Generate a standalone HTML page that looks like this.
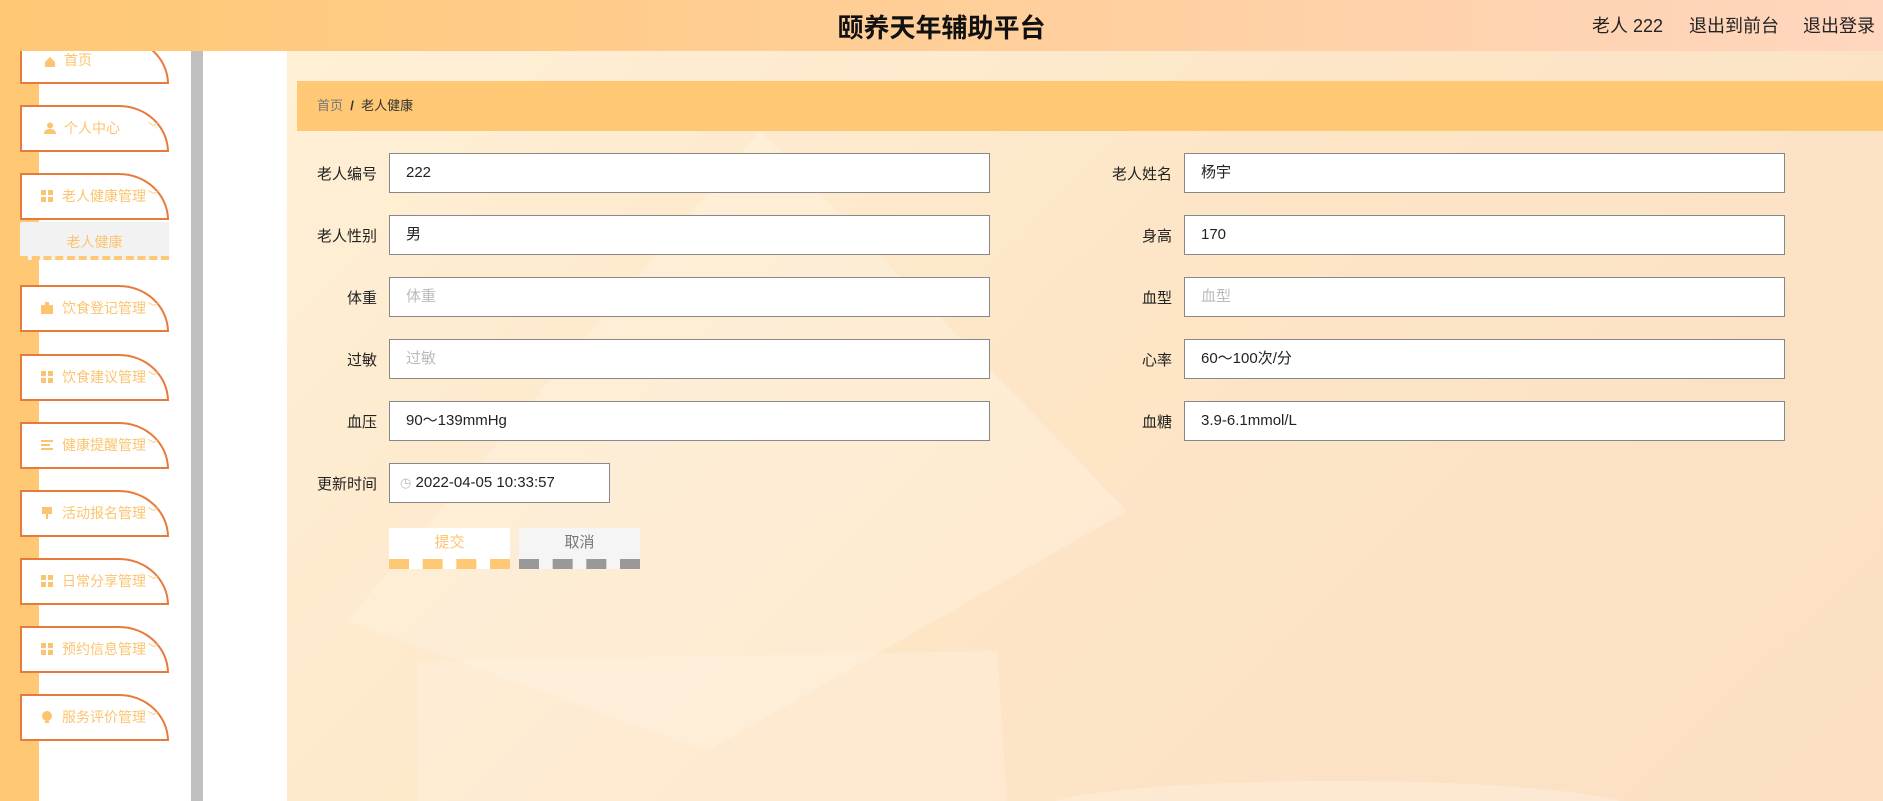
<!DOCTYPE html>
<html><head><meta charset="utf-8"><style>
*{margin:0;padding:0;box-sizing:border-box}
body{width:1883px;height:801px;overflow:hidden;font-family:"Liberation Sans","Noto Sans CJK SC",sans-serif;background:#fff;position:relative}
.hdr{position:absolute;left:0;top:0;width:1883px;height:51px;background:linear-gradient(90deg,#ffc874,#ffd0a0 60%,#ffd6bf);z-index:5}
.hdr .t{position:absolute;left:0;width:1883px;text-align:center;top:8px;font-size:26px;font-weight:bold;color:#111}
.hdr .r{position:absolute;top:12px;font-size:18px;color:#222}
.strip{position:absolute;left:0;top:51px;width:39px;height:750px;background:#ffc874}
.gray{position:absolute;left:191px;top:51px;width:12px;height:750px;background:#c0c0c0}
.main{position:absolute;left:287px;top:51px;width:1596px;height:750px;background:linear-gradient(135deg,#fff0d6,#fde5c6 50%,#fbe0c4);overflow:hidden}
.item{position:absolute;left:20px;width:149px;height:47px;background:#fff;border:2px solid #e87a3c;border-top-right-radius:50px 47px;color:#fcc46e;font-size:14px;line-height:43px;padding-left:42px}
.item .ic{position:absolute;left:22px;top:15px;width:12px;height:12px}
.item .ar{position:absolute;left:126px;top:0;font-size:11px}
.sub{position:absolute;left:20px;top:222px;width:149px;height:38px;background:#f2f2f2;color:#fcc46e;font-size:14px;text-align:center;line-height:40px;border-bottom:4px dashed #ffc874}
.bc{position:absolute;left:297px;top:81px;width:1586px;height:50px;background:#ffc874;font-size:13px;line-height:50px;padding-left:20px;color:#333}
.lbl{position:absolute;width:100px;text-align:right;font-size:15px;color:#222}
.in{position:absolute;height:40px;background:#fff;border:1px solid #888;font-size:15px;line-height:38px;padding-left:16px;color:#222}
.ph{color:#bbb}
.btn{position:absolute;top:528px;width:121px;height:41px;font-size:15px;text-align:center;line-height:30px}
</style></head><body>
<div class="hdr"><div class="t">颐养天年辅助平台</div>
<div class="r" style="left:1592px">老人 222</div><div class="r" style="left:1689px">退出到前台</div><div class="r" style="left:1803px">退出登录</div></div>
<div class="strip"></div>
<div class="gray"></div>
<div class="main">
<svg width="1596" height="750" style="position:absolute;left:0;top:0">
<polygon points="473,80 60,570 420,700 840,460" fill="#fff6e8" opacity="0.35"/>
<polygon points="130,610 710,600 720,750 130,750" fill="#fff4e6" opacity="0.35"/>
<ellipse cx="1050" cy="760" rx="300" ry="30" fill="#fff3e6" opacity="0.4"/>
</svg>
</div>
<div class="item" style="top:37px"><svg class="ic" viewBox="0 0 12 12" style="top:17px"><path d="M1 6L6 1 11 6V11H1Z" fill="#fcc46e"/></svg>首页</div>
<div class="item" style="top:105px"><svg class="ic" viewBox="0 0 12 12"><circle cx="6" cy="3.5" r="3" fill="#fcc46e"/><path d="M0 12Q0 7 6 7T12 12Z" fill="#fcc46e"/></svg>个人中心<span class="ar">﹀</span></div>
<div class="item" style="top:173px;padding-left:40px"><svg class="ic" viewBox="0 0 12 12" style="left:19px"><rect x="0" y="0" width="5" height="5" fill="#fcc46e"/><rect x="7" y="0" width="5" height="5" fill="#fcc46e"/><rect x="0" y="7" width="5" height="5" fill="#fcc46e"/><rect x="7" y="7" width="5" height="5" fill="#fcc46e"/></svg>老人健康管理<span class="ar">﹀</span></div>
<div class="sub">老人健康</div>
<div class="item" style="top:285px;padding-left:40px"><svg class="ic" viewBox="0 0 12 12" style="left:19px"><rect x="0" y="3" width="12" height="9" fill="#fcc46e"/><rect x="4" y="0" width="4" height="3" fill="#fcc46e"/></svg>饮食登记管理<span class="ar">﹀</span></div>
<div class="item" style="top:354px;padding-left:40px"><svg class="ic" viewBox="0 0 12 12" style="left:19px"><rect x="0" y="0" width="5" height="5" fill="#fcc46e"/><rect x="7" y="0" width="5" height="5" fill="#fcc46e"/><rect x="0" y="7" width="5" height="5" fill="#fcc46e"/><rect x="7" y="7" width="5" height="5" fill="#fcc46e"/></svg>饮食建议管理<span class="ar">﹀</span></div>
<div class="item" style="top:422px;padding-left:40px"><svg class="ic" viewBox="0 0 12 12" style="left:19px"><rect x="0" y="1" width="12" height="2" fill="#fcc46e"/><rect x="0" y="5" width="9" height="2" fill="#fcc46e"/><rect x="0" y="9" width="12" height="2" fill="#fcc46e"/></svg>健康提醒管理<span class="ar">﹀</span></div>
<div class="item" style="top:490px;padding-left:40px"><svg class="ic" viewBox="0 0 12 12" style="left:19px"><rect x="1" y="0" width="10" height="7" fill="#fcc46e"/><rect x="5" y="7" width="2" height="5" fill="#fcc46e"/></svg>活动报名管理<span class="ar">﹀</span></div>
<div class="item" style="top:558px;padding-left:40px"><svg class="ic" viewBox="0 0 12 12" style="left:19px"><rect x="0" y="0" width="5" height="5" fill="#fcc46e"/><rect x="7" y="0" width="5" height="5" fill="#fcc46e"/><rect x="0" y="7" width="5" height="5" fill="#fcc46e"/><rect x="7" y="7" width="5" height="5" fill="#fcc46e"/></svg>日常分享管理<span class="ar">﹀</span></div>
<div class="item" style="top:626px;padding-left:40px"><svg class="ic" viewBox="0 0 12 12" style="left:19px"><rect x="0" y="0" width="5" height="5" fill="#fcc46e"/><rect x="7" y="0" width="5" height="5" fill="#fcc46e"/><rect x="0" y="7" width="5" height="5" fill="#fcc46e"/><rect x="7" y="7" width="5" height="5" fill="#fcc46e"/></svg>预约信息管理<span class="ar">﹀</span></div>
<div class="item" style="top:694px;padding-left:40px"><svg class="ic" viewBox="0 0 12 12" style="left:19px"><circle cx="6" cy="5" r="5" fill="#fcc46e"/><rect x="4" y="10" width="4" height="2" fill="#fcc46e"/></svg>服务评价管理<span class="ar">﹀</span></div>

<div class="bc"><span style="color:#777">首页</span>&nbsp;&nbsp;<b>/</b>&nbsp;&nbsp;老人健康</div>

<div class="lbl" style="left:277px;top:163px">老人编号</div><div class="in" style="left:389px;top:153px;width:601px">222</div>
<div class="lbl" style="left:1072px;top:163px">老人姓名</div><div class="in" style="left:1184px;top:153px;width:601px">杨宇</div>
<div class="lbl" style="left:277px;top:225px">老人性别</div><div class="in" style="left:389px;top:215px;width:601px">男</div>
<div class="lbl" style="left:1072px;top:225px">身高</div><div class="in" style="left:1184px;top:215px;width:601px">170</div>
<div class="lbl" style="left:277px;top:287px">体重</div><div class="in ph" style="left:389px;top:277px;width:601px">体重</div>
<div class="lbl" style="left:1072px;top:287px">血型</div><div class="in ph" style="left:1184px;top:277px;width:601px">血型</div>
<div class="lbl" style="left:277px;top:349px">过敏</div><div class="in ph" style="left:389px;top:339px;width:601px">过敏</div>
<div class="lbl" style="left:1072px;top:349px">心率</div><div class="in" style="left:1184px;top:339px;width:601px">60～100次/分</div>
<div class="lbl" style="left:277px;top:411px">血压</div><div class="in" style="left:389px;top:401px;width:601px">90～139mmHg</div>
<div class="lbl" style="left:1072px;top:411px">血糖</div><div class="in" style="left:1184px;top:401px;width:601px">3.9-6.1mmol/L</div>
<div class="lbl" style="left:277px;top:473px">更新时间</div><div class="in" style="left:389px;top:463px;width:221px;padding-left:10px"><span style="color:#bbb;font-size:13px">◷</span> 2022-04-05 10:33:57</div>

<div class="btn" style="left:389px;background:#fff;color:#fcc46e;border-bottom:10px dashed #ffc874">提交</div>
<div class="btn" style="left:519px;background:#f5f5f5;color:#777;border-bottom:10px dashed #999">取消</div>
</body></html>
